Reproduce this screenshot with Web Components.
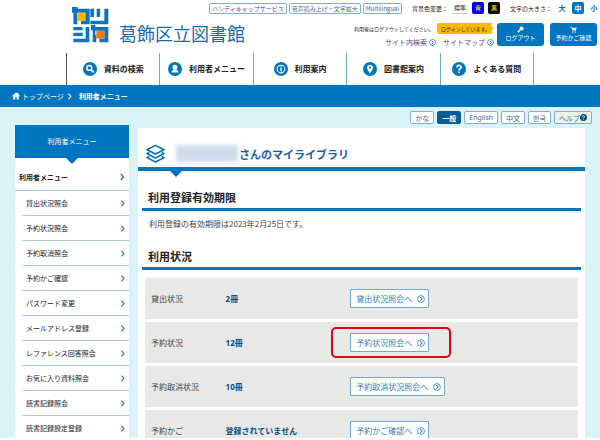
<!DOCTYPE html>
<html lang="ja">
<head>
<meta charset="utf-8">
<meta name="viewport" content="width=device-width, initial-scale=1">
<title>葛飾区立図書館</title>
<style>
    body {
        margin: 0;
        background: #fff;
        color: #222;
        font-family: "Noto Sans CJK JP", sans-serif;
        font-size: 7px;
        line-height: 10px;
    }
</style>
</head>
<body>
<library-page></library-page>

<script>
const base = `
    * { box-sizing: border-box; }
    a { color: inherit; text-decoration: none; }
    button { font: inherit; color: inherit; margin: 0; padding: 0; cursor: pointer; }
    ul { list-style: none; margin: 0; padding: 0; }
    svg { display: block; flex: none; }
`;

function define(name, css, html) {
    const template = document.createElement('template');
    template.innerHTML = `<style>${base}${css}</style>${html}`;
    customElements.define(name, class extends HTMLElement {
        constructor() {
            super();
            this.attachShadow({ mode: 'open' });
            this.shadowRoot.appendChild(template.content.cloneNode(true));
        }
    });
}

// icons
const icons = {
    search: '<circle cx="10" cy="10" r="10" fill="#0075c1"/><circle cx="9" cy="8.5" r="3.5" fill="none" stroke="#fff" stroke-width="2"/><path d="M11.500 11l4 4" stroke="#fff" stroke-width="2.5"/>',
    user: '<circle cx="10" cy="10" r="10" fill="#0075c1"/><path d="M10 4c-2.300 0-3.500 1.500-3.500 3.500 0 1.600.700 3 2 3.700C6 12 5 13 5 15h10c0-2-1-3-3.500-3.800 1.300-.700 2-2.100 2-3.700C13.500 5.500 12.300 4 10 4z" fill="#fff"/>',
    info: '<circle cx="10" cy="10" r="10" fill="#0075c1"/><circle cx="10" cy="10" r="5.5" fill="none" stroke="#fff" stroke-width="1.5"/><path d="M10 6.300v1.700M9 9.500h1.200v4" fill="none" stroke="#fff" stroke-width="1.8"/>',
    pin: '<circle cx="10" cy="10" r="10" fill="#0075c1"/><path d="M10 4a4.200 4.200 0 0 0-4.200 4.200C5.800 11 8.500 13 10 16.500 11.500 13 14.200 11 14.200 8.200A4.200 4.200 0 0 0 10 4z" fill="#fff"/><circle cx="10" cy="8" r="1.5" fill="#0075c1"/>',
    help: '<circle cx="10" cy="10" r="10" fill="#0075c1"/><path d="M7 8c0-4 6-4 6-.500 0 2.200-3 2.200-3 4.500M10 13.500v2.300" fill="none" stroke="#fff" stroke-width="2.4"/>',
    helpdark: '<circle cx="10" cy="10" r="10" fill="#0a4f86"/><path d="M7 8c0-4 6-4 6-.500 0 2.200-3 2.200-3 4.500M10 13.500v2.300" fill="none" stroke="#fff" stroke-width="2.4"/>',
    go: '<circle cx="10" cy="10" r="8.5" fill="none" stroke="currentColor" stroke-width="2"/><path d="M8 5.500l4.500 4.500L8 14.500" fill="none" stroke="currentColor" stroke-width="2.6"/>',
    chevron: '<path d="M7 2l7 8-7 8" fill="none" stroke="currentColor" stroke-width="3"/>',
    home: '<path d="M10 1L0 10l1.500 1.500L3 10.200V19h5v-6h4v6h5v-8.800l1.500 1.300L20 10l-4-3.600V2h-3v1.700z" fill="#fff"/>',
    key: '<circle cx="13" cy="7" r="5.5" fill="#fff"/><path d="M10 10l-8 8M3 15l3 3" stroke="#fff" stroke-width="3.5"/>',
    cart: '<path d="M1 2h4l1 3h13l-2.500 8H7L4 4H1z" fill="#fff"/><circle cx="8" cy="17" r="2" fill="#fff"/><circle cx="15" cy="17" r="2" fill="#fff"/>',
    layers: '<g fill="none" stroke="#0070b8" stroke-width="1.6" stroke-linejoin="round"><path d="M10 1.500l9 4.500-9 4.500L1 6z"/><path d="M3.500 9L1 10.200l9 4.500 9-4.500L16.500 9"/><path d="M3.500 13.200L1 14.400l9 4.500 9-4.500-2.500-1.200"/></g>'
};

class UiIcon extends HTMLElement {
    constructor() {
        super();
        this.attachShadow({ mode: 'open' });
    }

    connectedCallback() {
        const size = this.getAttribute('size') || 8;
        this.shadowRoot.innerHTML = `
            <style>
                :host { display: block; flex: none; }
                svg { display: block; }
            </style>
            <svg width="${size}" height="${size}" viewBox="0 0 20 20" aria-hidden="true">${icons[this.getAttribute('name')]}</svg>
        `;
    }
}
customElements.define('ui-icon', UiIcon);

define('site-logo', `
    :host { display: block; }
    a { display: flex; align-items: flex-end; gap: 9px; color: #1a69b3; font-size: 18px; line-height: 20px; white-space: nowrap; }
`, `
    <a href="#">
        <svg width="38" height="36" viewBox="0 0 114 108" aria-hidden="true">
            <g fill="#0d74c4">
                <path d="M0 0h17v5h36v47H27V41h13V17H16v35H4V17H0z"/>
                <path d="M55 5h11v25H55zM74 5h10v25H74zM97 5h12v47H55V41h42z"/>
                <path d="M4 60h28v10H4zM4 77h28v10H4zM4 95h37V60h11v46H4z"/>
                <path d="M57 54h13v6h39v46H82V95h15V71H70v14h-8V70h-5zM62 84h11v22H62z"/>
            </g>
            <path d="M16 17h24v25H16z" fill="#fbb900"/>
            <path d="M73 71h24v24H73z" fill="#f07d00"/>
        </svg>
        <span>葛飾区立図書館</span>
    </a>
`);

define('utility-bar', `
    :host { display: flex; justify-content: flex-end; align-items: center; gap: 2px; font-size: 6px; line-height: 9px; white-space: nowrap; }
    .box { border: 1px solid #7fb0d8; border-radius: 2px; padding: 0 2px; color: #44699c; }
    .box.visited { color: #67428c; }
    .group { display: flex; align-items: center; gap: 4px; margin-left: 8px; }
    button { width: 12px; height: 12px; border: 0; border-radius: 2px; background: #fff; line-height: 12px; }
    .std { border-bottom: 1px solid #ccc; border-radius: 0; width: 16px; }
    .blue { background: #0000f0; color: #ff0; }
    .black { background: #000; color: #ff0; }
    .size { color: #0068b7; font-size: 7px; font-weight: bold; }
    .size.on { background: #0075c1; color: #fff; }
`, `
    <a class="box visited" href="#">ハンディキャップサービス</a>
    <a class="box" href="#">音声読み上げ・文字拡大</a>
    <a class="box" href="#">Multilingual</a>
    <div class="group">
        <span>背景色変更：</span>
        <button class="std">標準</button>
        <button class="blue">青</button>
        <button class="black">黒</button>
    </div>
    <div class="group">
        <span>文字の大きさ：</span>
        <button class="size">大</button>
        <button class="size on">中</button>
        <button class="size">小</button>
    </div>
`);

define('account-box', `
    :host { display: flex; justify-content: flex-end; gap: 3px; white-space: nowrap; }
    .info { display: flex; flex-direction: column; align-items: flex-end; gap: 3px; }
    .line { display: flex; align-items: center; gap: 3px; font-size: 5px; }
    .badge { background: #fbb900; border-radius: 2px; padding: 0 4px; line-height: 11px; clip-path: polygon(0 0, 96% 0, 96% 35%, 100% 50%, 96% 65%, 96% 100%, 0 100%); }
    .links { display: flex; gap: 7px; color: #6a3b92; font-size: 7px; }
    .links a { display: flex; align-items: center; gap: 2px; }
    .links ui-icon { color: #0068b7; }
    .buttons { display: flex; gap: 6px; }
    .btn { display: flex; flex-direction: column; align-items: center; width: 47px; height: 23px; padding-top: 3px; border-radius: 3px; background: #0075c1; color: #fff; font-size: 6px; }
`, `
    <div class="info">
        <div class="line"><span>利用後はログアウトしてください。</span><span class="badge">ログインしています。</span></div>
        <div class="links">
            <a href="#">サイト内検索<ui-icon name="go" size="7"></ui-icon></a>
            <a href="#">サイトマップ<ui-icon name="go" size="7"></ui-icon></a>
        </div>
    </div>
    <div class="buttons">
        <a class="btn" href="#"><ui-icon name="key" size="7"></ui-icon>ログアウト</a>
        <a class="btn" href="#"><ui-icon name="cart" size="7"></ui-icon>予約かご確認</a>
    </div>
`);

class NavItem extends HTMLElement {
    constructor() {
        super();
        this.attachShadow({ mode: 'open' });
    }

    connectedCallback() {
        this.shadowRoot.innerHTML = `
            <style>
                :host { display: block; flex: 1; border-right: 1px solid #6fa8d6; }
                a { display: flex; align-items: center; justify-content: center; gap: 7px; height: 32px; color: inherit; text-decoration: none; white-space: nowrap; }
            </style>
            <a href="#"><ui-icon name="${this.getAttribute('icon')}" size="14"></ui-icon><slot></slot></a>
        `;
    }
}
customElements.define('nav-item', NavItem);

define('global-nav', `
    :host { display: block; padding: 0 11%; }
    nav { display: flex; border-left: 1px solid #555; font-size: 8px; font-weight: bold; }
`, `
    <nav>
        <nav-item icon="search">資料の検索</nav-item>
        <nav-item icon="user">利用者メニュー</nav-item>
        <nav-item icon="info">利用案内</nav-item>
        <nav-item icon="pin">図書館案内</nav-item>
        <nav-item icon="help">よくある質問</nav-item>
    </nav>
`);

define('site-header', `
    :host { display: block; background: #fff; padding-top: 2px; }
    .top { display: flex; height: 51px; padding-left: 12%; }
    site-logo { flex: none; width: 0; padding-top: 5px; }
    .right { display: flex; flex: 1; flex-direction: column; gap: 9px; }
    account-box { padding-right: 3px; }
`, `
    <div class="top">
        <site-logo></site-logo>
        <div class="right">
            <utility-bar></utility-bar>
            <account-box></account-box>
        </div>
    </div>
    <global-nav></global-nav>
`);

define('bread-crumb', `
    :host { display: block; background: #0075c1; color: #fff; }
    nav { display: flex; align-items: center; gap: 2px; height: 22px; padding-left: 12px; }
    strong { margin-left: 4px; }
`, `
    <nav>
        <ui-icon name="home"></ui-icon>
        <a href="#">トップページ</a>
        <ui-icon name="chevron" size="7"></ui-icon>
        <strong>利用者メニュー</strong>
    </nav>
`);

define('language-switch', `
    :host { display: flex; justify-content: flex-end; gap: 3px; padding: 4px 8px 0 0; }
    button { display: flex; align-items: center; justify-content: center; height: 13px; padding: 0 4px; border: 1px solid #85acd6; border-radius: 2px; background: #fff; color: #44699c; }
    .latin { font-family: "Noto Sans", sans-serif; }
    .korean { font-family: "Noto Sans CJK KR", sans-serif; }
    .on { background: #0a5a96; border-color: #0a5a96; color: #fff; font-weight: bold; }
    .help { background: #e9f6e6; }
`, `
    <button>かな</button>
    <button class="on">一般</button>
    <button class="latin" lang="en">English</button>
    <button lang="zh">中文</button>
    <button class="korean" lang="ko">한국</button>
    <button class="help">ヘルプ<ui-icon name="helpdark" size="7"></ui-icon></button>
`);

class SideMenu extends HTMLElement {
    constructor() {
        super();
        this.attachShadow({ mode: 'open' });
        this.items = ['貸出状況照会', '予約状況照会', '予約取消照会', '予約かご確認', 'パスワード変更', 'メールアドレス登録',
            'レファレンス回答照会', 'お気に入り資料照会', '読書記録照会', '読書記録設定登録'];
    }

    connectedCallback() {
        const items = this.items.map(item => `<li><a href="#">${item}<ui-icon name="chevron" size="7"></ui-icon></a></li>`).join('');

        this.shadowRoot.innerHTML = `
            <style>
                ${base}
                :host { display: block; background: #fff; }
                h2 { position: relative; margin: 0; background: #0075c1; color: #fff; font-size: 7px; font-weight: normal; line-height: 33px; text-align: center; }
                h2::after { content: ""; position: absolute; top: 100%; left: 50%; margin-left: -6px; border: 6px solid transparent; border-top-color: #0075c1; border-bottom: 0; }
                a { display: flex; align-items: center; justify-content: space-between; height: 25px; padding: 0 3px 0 4px; border-bottom: 1px solid #a9c9e4; white-space: nowrap; }
                ui-icon { color: #1a69b3; }
                .top { height: 33px; padding-top: 6px; font-weight: bold; }
                ul { padding-left: 7px; }
            </style>
            <h2>利用者メニュー</h2>
            <a class="top" href="#">利用者メニュー<ui-icon name="chevron" size="8"></ui-icon></a>
            <ul>${items}</ul>
        `;
    }
}
customElements.define('side-menu', SideMenu);

define('page-title', `
    :host { display: block; position: relative; border-bottom: 4px solid #0075c1; }
    :host::after { content: ""; position: absolute; top: 100%; left: 32px; margin-top: 4px; border: 6px solid transparent; border-top-color: #0075c1; border-bottom: 0; }
    h1 { display: flex; align-items: center; height: 39px; margin: 0; padding: 12px 8px 0; color: #1a5fa8; font-size: 11px; font-weight: bold; line-height: 16px; white-space: nowrap; }
    .name { width: 62px; height: 17px; margin-left: 11px; margin-right: 1px; background: #cfdcec; filter: blur(2px); }
`, `
    <h1><ui-icon name="layers" size="19"></ui-icon><span class="name"></span><slot></slot></h1>
`);

define('section-title', `
    :host { display: block; }
    h2 { margin: 0; padding: 0 6px 3px; border-bottom: 3px solid #0075c1; color: #222; font-size: 11px; font-weight: bold; line-height: 16px; }
`, `
    <h2><slot></slot></h2>
`);

class StatusTable extends HTMLElement {
    constructor() {
        super();
        this.attachShadow({ mode: 'open' });
        this.rows = [
            { name: '貸出状況', value: '2冊', link: '貸出状況照会へ' },
            { name: '予約状況', value: '12冊', link: '予約状況照会へ', marked: true },
            { name: '予約取消状況', value: '10冊', link: '予約取消状況照会へ' },
            { name: '予約かご', value: '登録されていません', link: '予約かご確認へ' }
        ];
    }

    connectedCallback() {
        const rows = this.rows.map(row => `
            <tr>
                <th scope="row">${row.name}</th>
                <td class="value">${row.value}</td>
                <td><span class="${row.marked ? 'marked' : ''}"><a href="#">${row.link}<ui-icon name="go"></ui-icon></a></span></td>
            </tr>`).join('');

        this.shadowRoot.innerHTML = `
            <style>
                ${base}
                :host { display: block; }
                table { width: 100%; border-spacing: 0; table-layout: fixed; font-size: 8px; }
                th, td { height: 44px; padding: 0 0 0 6px; border-bottom: 3px solid #fff; background: #e8e9e7; font-weight: normal; text-align: left; white-space: nowrap; }
                th { width: 17%; color: #444; }
                .value { width: 29%; padding-left: 7px; color: #0b4f85; font-family: "Noto Sans", "Noto Sans CJK JP", sans-serif; font-weight: bold; }
                a { display: flex; align-items: center; gap: 5px; height: 19px; padding: 0 3px 0 5px; border: 1px solid #6fa8d6; border-radius: 1px; background: #fff; color: #2f7fc0; }
                span { position: relative; display: inline-block; vertical-align: middle; }
                .marked::after { content: ""; position: absolute; inset: -6px -22px -6px -19px; border: 2px solid #e60012; border-radius: 5px; }
            </style>
            <table>${rows}</table>
        `;
    }
}
customElements.define('status-table', StatusTable);

define('my-library', `
    :host { display: block; background: #fff; color: #444; }
    .body { padding: 18px 4px 0; }
    p { margin: 0; padding: 7px 7px 18px; font-size: 8px; line-height: 12px; }
    status-table { padding: 8px 3px 0; }
`, `
    <page-title>さんのマイライブラリ</page-title>
    <div class="body">
        <section-title>利用登録有効期限</section-title>
        <p>利用登録の有効期限は2023年2月25日です。</p>
        <section-title>利用状況</section-title>
        <status-table></status-table>
    </div>
`);

define('library-page', `
    :host { display: flex; flex-direction: column; height: 100vh; padding-bottom: 2px; box-sizing: border-box; overflow: hidden; }
    main { flex: 1; min-height: 0; overflow: hidden; background: #daf3f9; }
    .columns { display: grid; grid-template-columns: 20% 1fr; gap: 9px; align-items: start; padding: 0 15px; }
    side-menu { margin-top: 1px; }
    my-library { margin-top: 4px; }
`, `
    <site-header></site-header>
    <bread-crumb></bread-crumb>
    <main>
        <language-switch></language-switch>
        <div class="columns">
            <side-menu></side-menu>
            <my-library></my-library>
        </div>
    </main>
`);
</script>
</body>
</html>
